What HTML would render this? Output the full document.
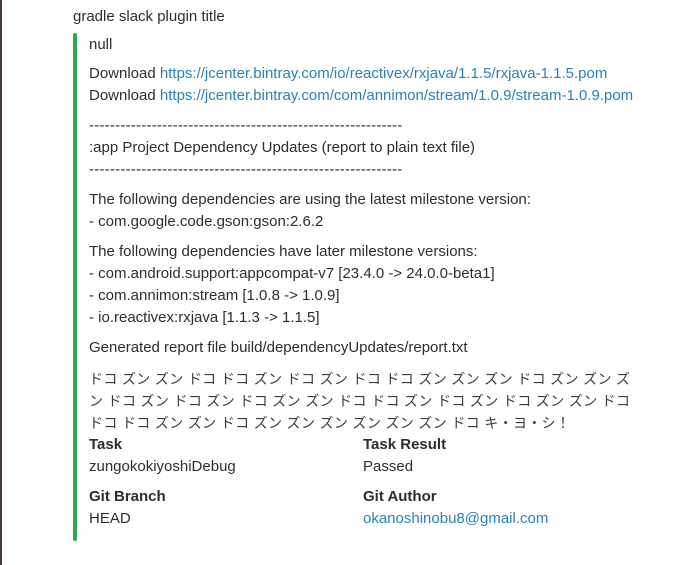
<html><head><style>
body{margin:0;width:688px;height:565px;background:#fff;position:relative;overflow:hidden;font-family:"Liberation Sans","Noto Sans CJK JP",sans-serif;font-size:15px;color:#2c2d30}
.l{position:absolute;left:89px;line-height:22px;white-space:nowrap;margin-top:1px}
a{color:#2a80b9;text-decoration:none}
b{font-weight:bold}
.jp{font-size:14px;letter-spacing:0.35px;color:#3a3a3a}
.d{letter-spacing:0.23px}
</style></head><body>
<div style="position:absolute;left:0;top:0;width:2px;height:565px;background:#4d394b"></div>
<div class="l" style="left:73px;top:5px">gradle slack plugin title</div>
<div style="position:absolute;left:73px;top:33px;width:4px;height:508px;background:#2fa84f;border-radius:2px"></div>
<div class="l" style="top:33px">null</div>
<div class="l" style="top:62px">Download <a>https://jcenter.bintray.com/io/reactivex/rxjava/1.1.5/rxjava-1.1.5.pom</a></div>
<div class="l" style="top:84px">Download <a>https://jcenter.bintray.com/com/annimon/stream/1.0.9/stream-1.0.9.pom</a></div>
<div class="l d" style="top:114px">------------------------------------------------------------</div>
<div class="l" style="top:136px">:app Project Dependency Updates (report to plain text file)</div>
<div class="l d" style="top:158px">------------------------------------------------------------</div>
<div class="l" style="top:188px">The following dependencies are using the latest milestone version:</div>
<div class="l" style="top:210px">- com.google.code.gson:gson:2.6.2</div>
<div class="l" style="top:240px">The following dependencies have later milestone versions:</div>
<div class="l" style="top:262px">- com.android.support:appcompat-v7 [23.4.0 -&gt; 24.0.0-beta1]</div>
<div class="l" style="top:284px">- com.annimon:stream [1.0.8 -&gt; 1.0.9]</div>
<div class="l" style="top:306px">- io.reactivex:rxjava [1.1.3 -&gt; 1.1.5]</div>
<div class="l" style="top:336px">Generated report file build/dependencyUpdates/report.txt</div>
<div class="l jp" style="top:367px">ドコ ズン ズン ドコ ドコ ズン ドコ ズン ドコ ドコ ズン ズン ズン ドコ ズン ズン ズ</div>
<div class="l jp" style="top:389px">ン ドコ ズン ドコ ズン ドコ ズン ズン ドコ ドコ ズン ドコ ズン ドコ ズン ズン ドコ</div>
<div class="l jp" style="top:411px">ドコ ドコ ズン ズン ドコ ズン ズン ズン ズン ズン ズン ドコ キ・ヨ・シ！</div>
<div class="l" style="top:433px"><b>Task</b></div>
<div class="l" style="top:433px;left:363px"><b>Task Result</b></div>
<div class="l" style="top:455px">zungokokiyoshiDebug</div>
<div class="l" style="top:455px;left:363px">Passed</div>
<div class="l" style="top:485px"><b>Git Branch</b></div>
<div class="l" style="top:485px;left:363px"><b>Git Author</b></div>
<div class="l" style="top:507px">HEAD</div>
<div class="l" style="top:507px;left:363px"><a>okanoshinobu8@gmail.com</a></div>
</body></html>
